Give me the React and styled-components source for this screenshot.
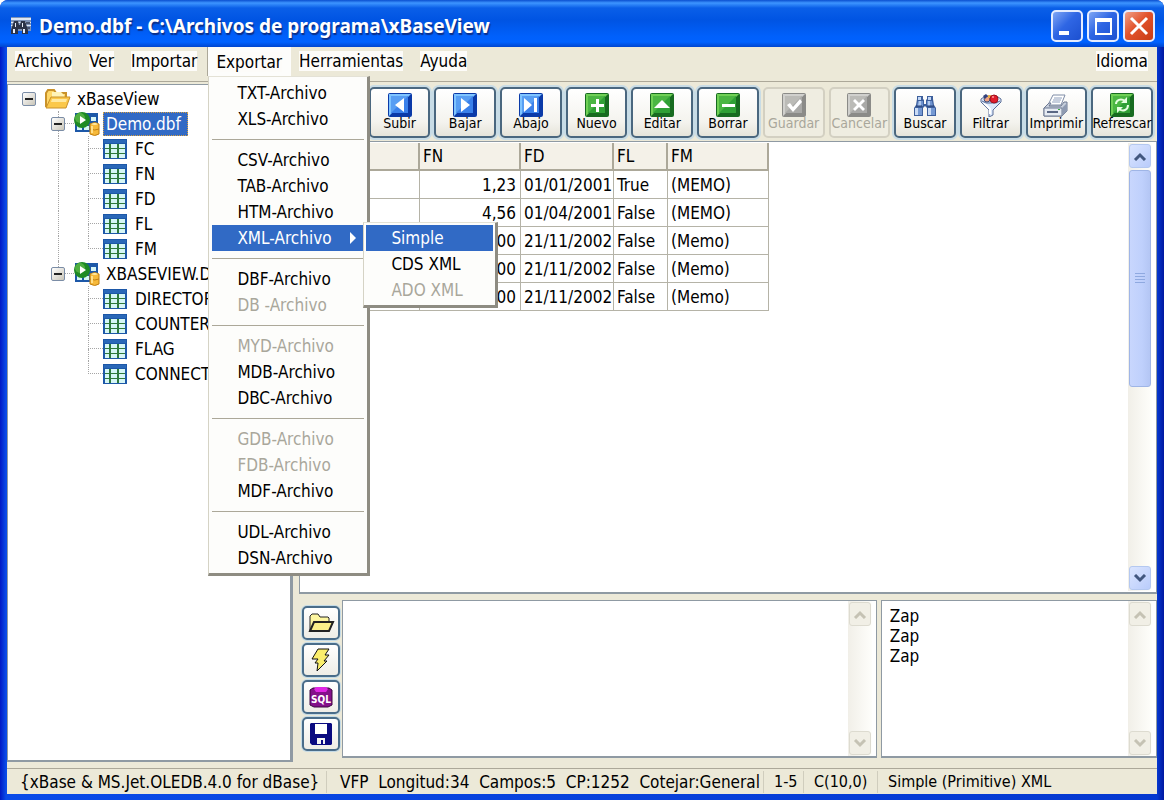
import React, { useState } from "react"
import styled, { createGlobalStyle, css } from "styled-components"

const COLORS = {
  face: "#ece9d8",
  select: "#316ac5",
  shadow: "#aca899",
  panelLine: "#8f9aa3",
  disabled: "#a9a79b",
}

const MENU = [
  ["TXT-Archivo", "XLS-Archivo"],
  ["CSV-Archivo", "TAB-Archivo", "HTM-Archivo", "XML-Archivo"],
  ["DBF-Archivo", "DB -Archivo"],
  ["MYD-Archivo", "MDB-Archivo", "DBC-Archivo"],
  ["GDB-Archivo", "FDB-Archivo", "MDF-Archivo"],
  ["UDL-Archivo", "DSN-Archivo"],
]

const DISABLED = ["DB -Archivo", "MYD-Archivo", "GDB-Archivo", "FDB-Archivo"]

const TREE = [
  { name: "Demo.dbf", fields: ["FC", "FN", "FD", "FL", "FM"] },
  {
    name: "XBASEVIEW.DBF",
    fields: ["DIRECTORY", "COUNTER", "FLAG", "CONNECTION"],
  },
]

const ROWS = [
  ["1,23", "01/01/2001", "True", "(MEMO)"],
  ["4,56", "01/04/2001", "False", "(MEMO)"],
  ["0,00", "21/11/2002", "False", "(Memo)"],
  ["0,00", "21/11/2002", "False", "(Memo)"],
  ["0,00", "21/11/2002", "False", "(Memo)"],
]

const GLYPHS = {
  first: "M7 6h2v12H7zM18 5v14l-8-7z",
  left: "M16 5v14l-9-7z",
  right: "M8 5v14l9-7z",
  last: "M5 5v14l8-7zM15 5h3v14h-3z",
  plus: "M11 6h3v5h5v3h-5v5h-3v-5H6v-3h5z",
  up: "M12 7l8 8H4z",
  minus: "M6 11h13v3H6z",
  check: "M5 12l3-2 3 4 7-8 2 3-9 10z",
  cross: "M6 8l2-2 4 4 4-4 2 2-4 4 4 4-2 2-4-4-4 4-2-2 4-4z",
}

const TONES = {
  blue: ["#7fc4ff", "#3a80ea", "#0b3aa8"],
  green: ["#6fd055", "#2fa035", "#176b20"],
  gray: ["#d0d0cd", "#a9a9a7", "#8b8b88"],
}

const SquareIcon = ({ tone, glyph }) => {
  const [light, mid, dark] = TONES[tone]
  return (
    <svg width="24" height="24" viewBox="0 0 24 24" aria-hidden="true">
      <rect x="0" y="0" width="24" height="24" rx="2" fill={dark} />
      <path d="M1 1h22l-3 3H4v16l-3 3z" fill={light} />
      <rect x="3" y="3" width="17" height="17" fill={mid} />
      <path d="M3 3h17L3 20z" fill={light} opacity="0.45" />
      {glyph === "refresh" ? (
        <g fill="none" stroke="#e6ffe0" strokeWidth="2">
          <path d="M6 11c0-4 5-6 9-3M18 12c0 5-5 7-9 4" />
          <path d="M17 4v6h-6zM7 20v-6h6z" fill="#e6ffe0" stroke="none" />
        </g>
      ) : (
        <path d={GLYPHS[glyph]} fill="#fff" />
      )}
    </svg>
  )
}

const BinocularsIcon = () => (
  <svg width="26" height="24" viewBox="0 0 26 24" aria-hidden="true">
    <path
      d="M5 6V3h6v3l1 1v4h2V7l1-1V3h6v3l1 6 2 3v8h-9v-8l-2-2-2 2v8H2v-8l2-3z"
      fill="#3d5f9c"
    />
    <path d="M6 4h3v3H6zM16 4h3v3h-3z" fill="#c3d7f5" />
    <path d="M6 8h5v5H5zM15 8h5l1 5h-6z" fill="#6f93cf" />
    <path d="M7 8h2v5H6zM16 8h2v5h-2z" fill="#b0c9ee" />
    <path d="M3 15h3v7H3zM16 15h3v7h-3z" fill="#c9dbf5" />
    <path d="M6 15h4v7H6zM19 15h4v7h-4z" fill="#7599d3" />
    <path d="M4 13h6M15 13h7" stroke="#263f73" />
  </svg>
)

const FunnelIcon = () => (
  <svg width="24" height="24" viewBox="0 0 24 24" aria-hidden="true">
    <path d="M2 6l3-2h14l3 2v3l-8 8v5l-4 2v-7L2 9z" fill="#dce9fb" stroke="#5a6d96" />
    <path d="M5 10l6 6v5" fill="none" stroke="#fff" strokeWidth="2" />
    <path d="M3 8l4 2h10l4-2" fill="#b9cdee" stroke="#5a6d96" />
    <circle cx="8" cy="6" r="3" fill="#f0a080" stroke="#44507a" />
    <path d="M4 3l3-2 2 2-3 3z" fill="#33427c" />
    <path d="M9 2h3v3H9z" fill="#e8b04c" />
    <circle cx="15" cy="6" r="4" fill="#e01c2b" stroke="#9c0f1c" />
    <circle cx="14" cy="4" r="1" fill="#ff9a9a" />
  </svg>
)

const PrinterIcon = () => (
  <svg width="28" height="24" viewBox="0 0 28 24" aria-hidden="true">
    <path d="M11 2h12l-4 10H6z" fill="#fff" stroke="#7f8ca6" />
    <path d="M12 5h8M11 7h8M10 9h8" stroke="#90a0bd" />
    <path d="M2 15l5-5h2l-2 3h12l3-4h3v9l-5 5H2z" fill="#c6cedb" stroke="#6c7891" />
    <path d="M2 15h18v8H2z" fill="#e6ebf2" stroke="#6c7891" />
    <path d="M20 15l5-5v8l-5 5z" fill="#8e9ab1" />
    <path d="M5 18h11v2H5z" fill="#5a6784" />
    <path d="M16 16h2v1h-2z" fill="#42a847" />
  </svg>
)

const TOOLS = [
  { id: "first", icon: <SquareIcon tone="blue" glyph="first" /> },
  { label: "Subir", icon: <SquareIcon tone="blue" glyph="left" /> },
  { label: "Bajar", icon: <SquareIcon tone="blue" glyph="right" /> },
  { label: "Abajo", icon: <SquareIcon tone="blue" glyph="last" /> },
  { label: "Nuevo", icon: <SquareIcon tone="green" glyph="plus" /> },
  { label: "Editar", icon: <SquareIcon tone="green" glyph="up" /> },
  { label: "Borrar", icon: <SquareIcon tone="green" glyph="minus" /> },
  { label: "Guardar", icon: <SquareIcon tone="gray" glyph="check" />, disabled: true },
  { label: "Cancelar", icon: <SquareIcon tone="gray" glyph="cross" />, disabled: true },
  { label: "Buscar", icon: <BinocularsIcon /> },
  { label: "Filtrar", icon: <FunnelIcon /> },
  { label: "Imprimir", icon: <PrinterIcon /> },
  { label: "Refrescar", icon: <SquareIcon tone="green" glyph="refresh" /> },
]

const AppIcon = () => (
  <svg width="22" height="18" viewBox="0 0 22 18" aria-hidden="true">
    <path d="M1 0h20v14H1z" fill="#7d93b8" />
    <path d="M1 1h20v2H1zM1 5h20v1H1zM1 8h20v1H1z" fill="#dfe7f3" />
    <path d="M4 4h4l1 4h1l1-4h4l3 9v4h-6v-5H8v5H1v-4z" fill="#2b3348" />
    <path d="M3 12h2v4H3zM13 12h2v4h-2zM5 6h1v4H5zM12 6h1v4h-1z" fill="#e8eefa" />
    <path d="M16 5h4v2h-4zM17 10h3v2h-3z" fill="#46536f" />
  </svg>
)

const FolderIcon = () => (
  <svg width="26" height="22" viewBox="0 0 26 22" aria-hidden="true">
    <path d="M1 19V5l2-3h6l2 3h10v4" fill="#ffd86a" stroke="#c9922a" strokeWidth="2" />
    <path d="M7 4h9l3 3v5H7z" fill="#fff3b8" />
    <path d="M1 20L6 9h19l-4 11z" fill="#fbc84a" stroke="#c9922a" />
    <path d="M7 11h15l-1 3H6z" fill="#ffe9a0" />
  </svg>
)

const TableIcon = () => (
  <svg width="24" height="20" viewBox="0 0 24 20" aria-hidden="true">
    <rect width="24" height="20" fill="#1d58a8" />
    <rect x="1" y="1" width="22" height="3" fill="#2a68b8" />
    <rect x="2" y="5" width="20" height="14" fill="#2f7a3c" />
    <path
      d="M2 5h4v4H2zM8 5h6v4H8zM16 5h6v4h-6zM2 10h4v4H2zM8 10h6v4H8zM16 10h6v4h-6zM2 15h4v4H2zM8 15h6v4H8zM16 15h6v4h-6z"
      fill="#d6f6f6"
    />
  </svg>
)

const DatabaseIcon = () => (
  <svg width="26" height="24" viewBox="0 0 26 24" aria-hidden="true">
    <path d="M1 1h23v19H1z" fill="#1d58a8" />
    <path d="M3 14h5v4H3zM10 14h5v4h-5zM17 5h5v4h-5zM17 11h5v3h-5z" fill="#d6f6f6" />
    <circle cx="8" cy="8" r="8" fill="#1f8a24" />
    <circle cx="6" cy="6" r="5" fill="#4fae40" />
    <path d="M6 4l6 4-6 4z" fill="#fff" />
    <path d="M16 12q5-3 9 0v10q-4 3-9 0z" fill="#f6b93a" stroke="#c07f12" />
    <path d="M17 12q4-2 7 0-3 2-7 0z" fill="#ffe9a4" />
    <path d="M16 17q5 2 9 0" fill="none" stroke="#c07f12" />
    <path d="M18 14v7" stroke="#ffe08a" strokeWidth="2" />
  </svg>
)

const OpenIcon = () => (
  <svg width="28" height="22" viewBox="0 0 28 22" aria-hidden="true">
    <path
      d="M3 18V4l2-2h6l2 3h8l1 1v4h4l-4 9H3z"
      fill="#fdf6a0"
      stroke="#222"
      strokeWidth="1"
      strokeLinejoin="round"
    />
    <path d="M3 19l4-9h19l-4 9z" fill="#fbf08a" stroke="#222" strokeWidth="2" />
  </svg>
)

const BoltIcon = () => (
  <svg width="22" height="26" viewBox="0 0 22 26" aria-hidden="true">
    <path
      d="M8 2h11l-4 6h4l-5 6h3L7 24l1-8H5l3-4H2z"
      fill="#fbee6c"
      stroke="#111"
      strokeWidth="1"
      strokeLinejoin="round"
    />
  </svg>
)

const SqlIcon = () => (
  <svg width="24" height="24" viewBox="0 0 24 24" aria-hidden="true">
    <path d="M1 5l3-2h16l3 2v15l-4 2H5l-4-2z" fill="#84108a" stroke="#3a063e" />
    <path d="M7 2h10l2 2-2 3H7L5 4z" fill="#df25e4" />
    <text
      x="12"
      y="18"
      textAnchor="middle"
      fill="#fff"
      fontFamily="'DejaVu Sans Condensed', 'DejaVu Sans', sans-serif"
      fontSize="10"
      fontWeight="700"
    >
      SQL
    </text>
  </svg>
)

const DiskIcon = () => (
  <svg width="22" height="22" viewBox="0 0 22 22" aria-hidden="true">
    <path d="M1 0h20l1 1v20l-1 1H2l-2-2V1z" fill="#0a0a80" />
    <path d="M5 1h12v10H5z" fill="#fff" />
    <path d="M7 15h8v6H7z" fill="#f4f4f4" />
    <path d="M11 17h2v4h-2z" fill="#0a0a80" />
  </svg>
)

const Chevron = ({ down }) => (
  <svg width="14" height="9" viewBox="0 0 14 9" aria-hidden="true">
    <path
      d={down ? "M2 1l5 5 5-5" : "M2 8l5-5 5 5"}
      fill="none"
      stroke="currentColor"
      strokeWidth="3"
    />
  </svg>
)

const Scroll = ({ active, name }) => (
  <ScrollBar>
    <ScrollButton type="button" $active={active} aria-label={`${name} arriba`}>
      <Chevron />
    </ScrollButton>
    <ScrollTrack>
      {active && (
        <Thumb>
          <i />
          <i />
          <i />
          <i />
        </Thumb>
      )}
    </ScrollTrack>
    <ScrollButton type="button" $active={active} aria-label={`${name} abajo`}>
      <Chevron down />
    </ScrollButton>
  </ScrollBar>
)

const ExportMenu = () => (
  <Popup role="menu">
    {MENU.map((group, i) => (
      <MenuGroup key={i}>
        {group.map(label => {
          const isOpen = label === "XML-Archivo"
          return (
            <MenuEntry key={label}>
              <MenuButton
                type="button"
                role="menuitem"
                $selected={isOpen}
                disabled={DISABLED.includes(label)}
              >
                {label}
                {isOpen && (
                  <svg width="6" height="12" viewBox="0 0 6 12" aria-hidden="true">
                    <path d="M0 0v12l6-6z" fill="#fff" />
                  </svg>
                )}
              </MenuButton>
              {isOpen && (
                <SubPopup role="menu">
                  <MenuButton type="button" role="menuitem" $selected>
                    Simple
                  </MenuButton>
                  <MenuButton type="button" role="menuitem">
                    CDS XML
                  </MenuButton>
                  <MenuButton type="button" role="menuitem" disabled>
                    ADO XML
                  </MenuButton>
                </SubPopup>
              )}
            </MenuEntry>
          )
        })}
      </MenuGroup>
    ))}
  </Popup>
)

const Tree = () => (
  <TreePanel aria-label="Tablas">
    <TreeRow>
      <ToggleCell $first $last>
        <Toggle type="button" aria-label="Contraer xBaseView" />
      </ToggleCell>
      <TreeIcon>
        <FolderIcon />
      </TreeIcon>
      <TreeLabel>xBaseView</TreeLabel>
    </TreeRow>
    {TREE.map((table, i) => {
      const isLast = i === TREE.length - 1
      return (
        <React.Fragment key={table.name}>
          <TreeRow $level={1}>
            <ToggleCell $last={isLast}>
              <Toggle type="button" aria-label={`Contraer ${table.name}`} />
            </ToggleCell>
            <TreeIcon $linked>
              <DatabaseIcon />
            </TreeIcon>
            <TreeLabel $selected={i === 0}>{table.name}</TreeLabel>
          </TreeRow>
          {table.fields.map((field, j) => (
            <TreeRow key={field} $level={2}>
              <Trunk $hidden={isLast} />
              <Branch $last={j === table.fields.length - 1} />
              <TableIcon />
              <FieldLabel>{field}</FieldLabel>
            </TreeRow>
          ))}
        </React.Fragment>
      )
    })}
  </TreePanel>
)

const App = () => {
  const [sql, setSql] = useState("")

  return (
    <>
      <GlobalStyle />
      <Window>
        <TitleBar>
          <AppIcon />
          <h1>Demo.dbf - C:\Archivos de programa\xBaseView</h1>
          <WindowButton type="button" aria-label="Minimizar">
            <svg width="24" height="24" viewBox="0 0 24 24">
              <path d="M4 17h10v4H4z" fill="#fff" />
            </svg>
          </WindowButton>
          <WindowButton type="button" aria-label="Maximizar">
            <svg width="24" height="24" viewBox="0 0 24 24">
              <path d="M4 4h17v17H4zM6 8v11h13V8z" fill="#fff" fillRule="evenodd" />
            </svg>
          </WindowButton>
          <WindowButton type="button" $close aria-label="Cerrar">
            <svg width="24" height="24" viewBox="0 0 24 24">
              <path d="M4 4l16 16M20 4L4 20" stroke="#fff" strokeWidth="3" />
            </svg>
          </WindowButton>
        </TitleBar>

        <Client>
          <MenuBar>
            <MenuTitle type="button"><span>Archivo</span></MenuTitle>
            <MenuTitle type="button"><span>Ver</span></MenuTitle>
            <MenuTitle type="button"><span>Importar</span></MenuTitle>
            <MenuAnchor>
              <MenuTitle type="button" $open aria-expanded="true">
                <span>Exportar</span>
              </MenuTitle>
              <ExportMenu />
            </MenuAnchor>
            <MenuTitle type="button"><span>Herramientas</span></MenuTitle>
            <MenuTitle type="button"><span>Ayuda</span></MenuTitle>
            <Spacer />
            <MenuTitle type="button"><span>Idioma</span></MenuTitle>
          </MenuBar>

          <Workspace>
            <Tree />
            <Main>
              <ToolBar>
                {TOOLS.map(({ id, label, icon, disabled }) => (
                  <ToolButton key={id || label} type="button" disabled={disabled}>
                    {icon}
                    {label && <span>{label}</span>}
                  </ToolButton>
                ))}
              </ToolBar>

              <GridPanel>
                <GridArea>
                  <DataTable>
                    <colgroup>
                      <Col $w={17} />
                      <Col $w={102} />
                      <Col $w={101} />
                      <Col $w={93} />
                      <Col $w={54} />
                      <Col $w={101} />
                    </colgroup>
                    <thead>
                      <tr>
                        <th />
                        <th />
                        <th>FN</th>
                        <th>FD</th>
                        <th>FL</th>
                        <th>FM</th>
                      </tr>
                    </thead>
                    <tbody>
                      {ROWS.map(([fn, fd, fl, fm], i) => (
                        <tr key={i}>
                          <td />
                          <td />
                          <Numeric>{fn}</Numeric>
                          <td>{fd}</td>
                          <td>{fl}</td>
                          <td>{fm}</td>
                        </tr>
                      ))}
                    </tbody>
                  </DataTable>
                </GridArea>
                <Scroll active name="Datos" />
              </GridPanel>

              <BottomPane>
                <SideBar>
                  <SideButton type="button" aria-label="Abrir"><OpenIcon /></SideButton>
                  <SideButton type="button" aria-label="Ejecutar"><BoltIcon /></SideButton>
                  <SideButton type="button" aria-label="SQL"><SqlIcon /></SideButton>
                  <SideButton type="button" aria-label="Guardar SQL"><DiskIcon /></SideButton>
                </SideBar>
                <TextPanel $grow={536}>
                  <Editor
                    aria-label="Consulta SQL"
                    value={sql}
                    onChange={({ target: { value } }) => setSql(value)}
                  />
                  <Scroll name="Consulta" />
                </TextPanel>
                <TextPanel $grow={274}>
                  <Log>
                    <li>Zap</li>
                    <li>Zap</li>
                    <li>Zap</li>
                  </Log>
                  <Scroll name="Historial" />
                </TextPanel>
              </BottomPane>
            </Main>
          </Workspace>

          <StatusBar>
            <StatusCell>{"{xBase & MS.Jet.OLEDB.4.0 for dBase}"}</StatusCell>
            <StatusCell>{"VFP  Longitud:34  Campos:5  CP:1252  Cotejar:General"}</StatusCell>
            <StatusCell $small>1-5</StatusCell>
            <StatusCell $small>C(10,0)</StatusCell>
            <StatusCell $small>Simple (Primitive) XML</StatusCell>
          </StatusBar>
        </Client>
      </Window>
    </>
  )
}

const GlobalStyle = createGlobalStyle`
  * {
    box-sizing: border-box;
  }

  body {
    margin: 0;
    background: #fff;
    color: #000;
    font-family: "DejaVu Sans Condensed", "DejaVu Sans", sans-serif;
    font-size: 17px;
  }

  button,
  textarea {
    font: inherit;
    color: inherit;
  }
`

const Window = styled.div`
  display: flex;
  flex-direction: column;
  height: 100vh;
  padding: 0 7px 6px;
  border-radius: 8px 8px 0 0;
  background: linear-gradient(90deg, #0019c4, #0a4be8 6px, #0538d0 calc(100% - 7px), #0018a0);
`

const TitleBar = styled.header`
  display: flex;
  align-items: center;
  gap: 4px;
  flex: none;
  height: 47px;
  margin: 0 -7px;
  padding: 5px 9px 0 10px;
  border-radius: 8px 8px 0 0;
  background: linear-gradient(
    180deg,
    #0a4fd0 0,
    #3d95ff 3px,
    #0a5fe8 8px,
    #0054e3 20px,
    #0060fb 36px,
    #0062ff 42px,
    #0046cf 47px
  );

  h1 {
    flex: 1;
    margin: 0 0 0 3px;
    overflow: hidden;
    color: #fff;
    font-family: "Noto Sans", "Open Sans", sans-serif;
    font-size: 19px;
    font-weight: 700;
    line-height: 28px;
    text-shadow: 1px 2px 1px #0a2f8a;
    white-space: nowrap;
  }
`

const WindowButton = styled.button`
  display: grid;
  place-items: center;
  width: 32px;
  height: 32px;
  padding: 0;
  border: 2px solid #e4ecff;
  border-radius: 5px;
  background: ${({ $close }) =>
    $close
      ? "linear-gradient(135deg, #f0a088, #e2532c 45%, #c83c14)"
      : "linear-gradient(135deg, #7fa6f5, #2f66e4 45%, #1c50d0)"};
`

const Client = styled.div`
  display: flex;
  flex: 1;
  flex-direction: column;
  min-height: 0;
  background: ${COLORS.face};
`

const MenuBar = styled.nav`
  display: flex;
  align-items: flex-start;
  flex: none;
  height: 35px;
  border-bottom: 1px solid ${COLORS.shadow};
`

const Spacer = styled.div`
  flex: 1;
`

const MenuTitle = styled.button`
  display: flex;
  align-items: flex-start;
  height: 29px;
  padding: 4px 9px 0 8px;
  border: 0;
  background: none;
  line-height: 20px;

  span {
    background: #fdfcf9;
  }

  ${({ $open }) =>
    $open &&
    css`
      padding-top: 5px;
      border-left: 1px solid ${COLORS.shadow};
      background: #fdfdfb;
    `}
`

const MenuAnchor = styled.div`
  position: relative;
  margin-left: 1px;
`

const popup = css`
  position: absolute;
  z-index: 2;
  border: solid;
  border-width: 1px 3px 3px 1px;
  border-color: #e4e2d6 #8e8c82 #8e8c82 #d5d3c5;
  background: #fdfdfb;
`

const Popup = styled.div`
  ${popup}
  top: 29px;
  left: 1px;
  width: 162px;
  padding: 3px 3px 2px;
`

const SubPopup = styled.div`
  ${popup}
  top: -3px;
  left: 151px;
  width: 135px;
  padding: 2px;
`

const MenuGroup = styled.div`
  & + & {
    padding-top: 7px;
    margin-top: 7px;
    border-top: 1px solid ${COLORS.shadow};
  }
`

const MenuEntry = styled.div`
  position: relative;
`

const MenuButton = styled.button`
  display: flex;
  align-items: center;
  justify-content: space-between;
  width: 100%;
  height: 26px;
  padding: 0 8px 0 25px;
  border: 0;
  background: ${({ $selected }) => ($selected ? COLORS.select : "none")};
  color: ${({ $selected }) => ($selected ? "#fff" : "#000")};
  white-space: nowrap;

  &:disabled {
    color: ${COLORS.disabled};
  }
`

const Workspace = styled.div`
  display: grid;
  grid-template-columns: minmax(0, 1fr) minmax(0, 3fr);
  gap: 6px;
  flex: 1;
  min-height: 0;
  padding-top: 2px;
`

const TreePanel = styled.section`
  overflow: hidden;
  padding: 1px 0 0 14px;
  border: 1px solid ${COLORS.panelLine};
  border-right-width: 3px;
  border-bottom-width: 2px;
  background: #fff;
`

const TreeRow = styled.div`
  display: flex;
  align-items: center;
  height: 25px;
  padding-left: ${({ $level = 0 }) => ($level === 0 ? 0 : $level === 1 ? 29 : 36)}px;
`

const dotted = "1px dotted #a5a5a5"

const ToggleCell = styled.div`
  display: flex;
  flex-direction: column;
  align-items: center;
  width: 14px;
  height: 100%;

  &::before,
  &::after {
    content: "";
    flex: 1;
    border-left: ${dotted};
  }

  &::before {
    visibility: ${({ $first }) => ($first ? "hidden" : "visible")};
  }

  &::after {
    visibility: ${({ $last }) => ($last ? "hidden" : "visible")};
  }
`

const Toggle = styled.button`
  display: grid;
  place-items: center;
  width: 14px;
  height: 14px;
  padding: 0;
  border: 1px solid #7b8da6;
  border-radius: 2px;
  background: linear-gradient(135deg, #fff, #c9c5b8);

  &::before {
    content: "";
    width: 8px;
    height: 2px;
    background: #222;
  }
`

const TreeIcon = styled.span`
  display: flex;
  align-items: center;
  width: 35px;

  &::before {
    content: "";
    width: 9px;
    border-top: ${({ $linked }) => ($linked ? dotted : 0)};
  }
`

const TreeLabel = styled.span`
  margin-left: 3px;
  padding: 0 6px 0 2px;
  border: 1px dotted transparent;
  line-height: 22px;
  white-space: nowrap;

  ${({ $selected }) =>
    $selected &&
    css`
      border-color: #d8a040;
      background: ${COLORS.select};
      color: #fff;
    `}
`

const FieldLabel = styled.span`
  margin-left: 8px;
  white-space: nowrap;
`

const Trunk = styled.span`
  width: 30px;
  height: 100%;
  border-left: ${({ $hidden }) => ($hidden ? "1px solid transparent" : dotted)};
`

const Branch = styled.span`
  display: flex;
  flex-direction: column;
  width: 15px;
  height: 100%;

  &::before,
  &::after {
    content: "";
    flex: 1;
    border-left: ${dotted};
  }

  &::before {
    border-bottom: ${dotted};
  }

  &::after {
    visibility: ${({ $last }) => ($last ? "hidden" : "visible")};
  }
`

const Main = styled.main`
  display: flex;
  flex-direction: column;
  min-width: 0;
  min-height: 0;
`

const ToolBar = styled.div`
  display: flex;
  gap: 4px;
  flex: none;
  height: 57px;
  padding: 3px 4px;
`

const ToolButton = styled.button`
  display: flex;
  flex: 1;
  flex-direction: column;
  align-items: center;
  min-width: 0;
  padding: 4px 0 0;
  border: 2px solid #4a677f;
  border-radius: 5px;
  background: linear-gradient(180deg, #fff, #f4f3ee 70%, #e6e4da);
  box-shadow: 0 0 0 2px #c8dce6;
  font-size: 14px;
  line-height: 18px;

  svg {
    flex: none;
  }

  span {
    margin-top: -3px;
  }

  &:disabled {
    border-color: #d3d0c2;
    background: #efede1;
    box-shadow: none;
    color: ${COLORS.disabled};
  }
`

const panel = css`
  display: flex;
  min-width: 0;
  min-height: 0;
  border: 1px solid ${COLORS.panelLine};
  border-bottom-width: 2px;
  background: #fff;
`

const GridPanel = styled.section`
  ${panel}
  flex: 1;
  padding: 1px 4px 1px 1px;
`

const GridArea = styled.div`
  flex: 1;
  min-width: 0;
  overflow: hidden;
`

const DataTable = styled.table`
  table-layout: fixed;
  width: 468px;
  border-collapse: separate;
  border-spacing: 0;

  th,
  td {
    height: 28px;
    padding: 0 0 0 3px;
    overflow: hidden;
    border: solid #b5b3a7;
    border-width: 0 1px 1px 0;
    font-weight: 400;
    text-align: left;
    white-space: nowrap;
  }

  th {
    border-width: 0 2px 2px 0;
    border-color: ${COLORS.shadow};
    background: #f4f1e8;
  }
`

const Col = styled.col`
  width: ${({ $w }) => $w}px;
`

const Numeric = styled.td`
  && {
    padding: 0 4px 0 0;
    text-align: right;
  }
`

const ScrollBar = styled.div`
  display: flex;
  flex: none;
  flex-direction: column;
  width: 24px;
  padding: 1px;
  background: linear-gradient(90deg, #f1efe8, #fefefb);
`

const ScrollButton = styled.button`
  display: grid;
  place-items: center;
  height: 24px;
  padding: 0;
  border: 1px solid ${({ $active }) => ($active ? "#b4c8f0" : "#dddbd0")};
  border-radius: 3px;
  background: ${({ $active }) => ($active ? "linear-gradient(135deg, #dbe5ff, #b9ccfb)" : "#f1efe6")};
  color: ${({ $active }) => ($active ? "#42577f" : "#c5c2b4")};
`

const ScrollTrack = styled.div`
  display: flex;
  flex: 1;
  flex-direction: column;
  padding: 2px 0;
`

const Thumb = styled.div`
  display: flex;
  flex: 0 0 55%;
  flex-direction: column;
  align-items: center;
  justify-content: center;
  gap: 2px;
  border: 1px solid #9fb5e6;
  border-radius: 3px;
  background: linear-gradient(90deg, #c8d6fd, #bfd0fc 60%, #b4c6f4);

  i {
    width: 10px;
    height: 1px;
    background: #8fa9e0;
  }
`

const BottomPane = styled.div`
  display: flex;
  flex: 0 1 158px;
  min-height: 0;
  margin: 6px 0 4px;
`

const SideBar = styled.div`
  display: flex;
  flex: none;
  flex-direction: column;
  gap: 3px;
  padding: 6px 2px 0 3px;
`

const SideButton = styled.button`
  display: grid;
  place-items: center;
  width: 38px;
  height: 34px;
  padding: 0;
  border: 2px solid #4a6d8a;
  border-radius: 5px;
  background: linear-gradient(180deg, #fff, #efede6);
  box-shadow: 0 0 0 1px #c3dae6;
`

const TextPanel = styled.div`
  ${panel}
  flex: ${({ $grow }) => $grow} 1 0;
  padding-right: 4px;

  & + & {
    margin-left: 4px;
  }
`

const Editor = styled.textarea`
  flex: 1;
  min-width: 0;
  padding: 4px;
  overflow: hidden;
  border: 0;
  outline: none;
  background: #fff;
  resize: none;
`

const Log = styled.ul`
  flex: 1;
  margin: 0;
  padding: 5px 8px;
  line-height: 20px;
  list-style: none;
`

const StatusBar = styled.footer`
  display: grid;
  grid-template-columns:
    minmax(0, 319fr) minmax(0, 437fr) minmax(0, 40fr)
    minmax(0, 74fr) minmax(0, 280fr);
  align-items: center;
  flex: none;
  height: 26px;
  margin-top: 6px;
  border-top: 1px solid ${COLORS.shadow};
`

const StatusCell = styled.div`
  padding-left: ${({ $small }) => ($small ? 10 : 13)}px;
  overflow: hidden;
  font-size: ${({ $small }) => ($small ? 16 : 17)}px;
  line-height: 22px;
  white-space: pre;

  & + & {
    border-left: 1px solid #d0cdbd;
  }
`

export default App
